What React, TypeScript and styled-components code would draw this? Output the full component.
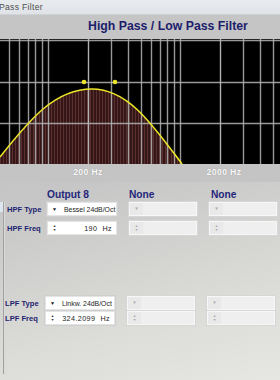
import React from "react";
import styled, { createGlobalStyle } from "styled-components";

const GlobalStyle = createGlobalStyle`
	* { box-sizing: border-box; }
	html, body { margin: 0; padding: 0; }
	body {
		width: 280px;
		height: 380px;
		overflow: hidden;
		font-family: "Liberation Sans", Arial, sans-serif;
		background: linear-gradient(165deg, #bfbfbf 0%, #c6c6c6 45%, #dcdcd8 80%, #e6e6e2 100%);
	}
`;

const CHART_W = 280;
const CHART_H = 125;

// log frequency axis: 200 Hz sits at 88px, one decade spans 132px
const fx = (f: number) => 88 + 132 * Math.log10(f / 200);

const gridFreqs = [
	50, 60, 70, 80, 90, 100, 200, 300, 400, 500, 600, 700, 800, 900, 1000, 2000,
	3000, 4000, 5000,
];
const gridRows = [1, 43, 84];

const curve = "M0,118 C30,80 55,50 92,50 C128,50 152,85 182,125";

function Chart() {
	return (
		<ChartBox>
			<svg width={CHART_W} height={CHART_H} viewBox={`0 0 ${CHART_W} ${CHART_H}`}>
				<defs>
					<pattern id="stripes" width="3" height="4" patternUnits="userSpaceOnUse">
						<rect width="3" height="4" fill="#351616" />
						<rect width="1" height="4" fill="#5a3030" />
					</pattern>
				</defs>
				<rect width={CHART_W} height={CHART_H} fill="#000" />
				<path d={`${curve} L0,125 Z`} fill="url(#stripes)" />
				{gridFreqs.map((f) => (
					<line
						key={f}
						x1={Math.round(fx(f)) + 0.5}
						x2={Math.round(fx(f)) + 0.5}
						y1={0}
						y2={CHART_H}
						stroke={f === 200 || f === 2000 ? "#cfcfcf" : "#b4b4b4"}
						strokeOpacity={0.85}
						strokeWidth={1.4}
					/>
				))}
				{gridRows.map((y) => (
					<line
						key={y}
						x1={0}
						x2={CHART_W}
						y1={y + 0.5}
						y2={y + 0.5}
						stroke="#b4b4b4"
						strokeOpacity={0.85}
						strokeWidth={1.4}
					/>
				))}
				<path d={curve} fill="none" stroke="#ece628" strokeWidth={1.6} />
				<circle cx={84} cy={43} r={2.3} fill="#ece628" />
				<circle cx={115} cy={43} r={2.3} fill="#ece628" />
			</svg>
		</ChartBox>
	);
}

type FieldProps = { kind: "select" | "spin"; value?: string; unit?: string; off?: boolean };

function Field({ kind, value, unit, off }: FieldProps) {
	return (
		<Box $off={off}>
			<Knob $off={off}>
				{kind === "select" ? (
					<Arrow $off={off}>▼</Arrow>
				) : (
					<Spin $off={off}>
						<span>▲</span>
						<span>▼</span>
					</Spin>
				)}
			</Knob>
			{kind === "select" ? (
				<SelectText>{value}</SelectText>
			) : (
				<SpinText>
					{value}
					{unit && <Unit>{unit}</Unit>}
				</SpinText>
			)}
		</Box>
	);
}

export default function App() {
	return (
		<>
			<GlobalStyle />
			<Window>
				<TitleBar>Pass Filter</TitleBar>
				<Header>High Pass / Low Pass Filter</Header>
				<Chart />
				<Axis>
					<AxisLabel style={{ left: fx(200) }}>200 Hz</AxisLabel>
					<AxisLabel style={{ left: fx(2000) + 4 }}>2000 Hz</AxisLabel>
				</Axis>
				<Controls>
					<Edge>
						<Stub />
					</Edge>
					<Panel>
						<Grid>
							<span />
							<ColHead>Output 8</ColHead>
							<ColHead>None</ColHead>
							<ColHead $pad={2}>None</ColHead>

							<RowLabel>HPF Type</RowLabel>
							<Field kind="select" value="Bessel 24dB/Oct" />
							<Field kind="select" off />
							<Field kind="select" off />

							<RowLabel>HPF Freq</RowLabel>
							<Field kind="spin" value="190" unit="Hz" />
							<Field kind="spin" off />
							<Field kind="spin" off />
						</Grid>
						<Grid $shift={-2} $top={61}>
							<RowLabel>LPF Type</RowLabel>
							<Field kind="select" value="Linkw. 24dB/Oct" />
							<Field kind="select" off />
							<Field kind="select" off />

							<RowLabel>LPF Freq</RowLabel>
							<Field kind="spin" value="324.2099" unit="Hz" />
							<Field kind="spin" off />
							<Field kind="spin" off />
						</Grid>
					</Panel>
				</Controls>
			</Window>
		</>
	);
}

const Window = styled.div`
	width: 280px;
	height: 380px;
	display: flex;
	flex-direction: column;
`;

const TitleBar = styled.div`
	height: 15px;
	margin-left: -1px;
	font-size: 8.6px;
	line-height: 15px;
	color: #4e4e4e;
	letter-spacing: 0.3px;
	background: linear-gradient(180deg, #e9ecef 0%, #dfe3e8 100%);
	border-bottom: 1px solid #d0d3d6;
`;

const Header = styled.div`
	height: 24px;
	padding: 4px 0 0 88px;
	font-size: 12.3px;
	font-weight: bold;
	line-height: 14px;
	color: #1c1d6c;
	background: #c5c5c5;
	white-space: nowrap;
`;

const ChartBox = styled.div`
	height: ${CHART_H}px;
	svg {
		display: block;
	}
`;

const Axis = styled.div`
	position: relative;
	height: 18px;
	background: #c4c4c4;
`;

const AxisLabel = styled.span`
	position: absolute;
	top: 3px;
	transform: translateX(-50%);
	font-size: 8.6px;
	font-weight: bold;
	letter-spacing: 0.4px;
	color: #fafafa;
	text-shadow: 0 0 1px #8a8a8a;
	white-space: nowrap;
`;

const Controls = styled.div`
	flex: 1;
	display: flex;
	padding-top: 7px;
`;

const Edge = styled.div`
	width: 4px;
	margin-top: 13px;
	height: 172px;
	border-right: 1px solid #a2a2a2;
	box-shadow: 1px 0 0 #d8d8d8;
`;

const Stub = styled.div`
	width: 3px;
	height: 10px;
	background: #dbe6f0;
`;

const Panel = styled.div`
	display: flex;
	flex-direction: column;
`;

const Grid = styled.div<{ $shift?: number; $top?: number }>`
	display: grid;
	grid-template-columns: 28px 70px 68px 68px;
	column-gap: 12px;
	row-gap: 5px;
	align-items: center;
	margin-top: ${(p) => p.$top ?? 0}px;
	padding-left: ${(p) => 3 + (p.$shift ?? 0)}px;
	& > *:nth-child(-n + 4) {
		margin-bottom: -4px;
	}
`;

const ColHead = styled.div<{ $pad?: number }>`
	padding-left: ${(p) => p.$pad ?? 0}px;
	font-size: 10.2px;
	font-weight: bold;
	line-height: 12px;
	color: #24267a;
`;

const RowLabel = styled.div`
	font-size: 7.6px;
	font-weight: bold;
	color: #1e2470;
	white-space: nowrap;
`;

const Box = styled.div<{ $off?: boolean }>`
	height: 14px;
	display: flex;
	align-items: center;
	overflow: hidden;
	background: ${(p) => (p.$off ? "#efefef" : "#ffffff")};
	border: 1px solid ${(p) => (p.$off ? "#f7f7f7" : "#e4e4e4")};
	box-shadow: ${(p) => (p.$off ? "0 0 0 1px #d6d6d6" : "0 0 0 1px #cfcfcf")};
`;

const Knob = styled.div<{ $off?: boolean }>`
	width: 13px;
	height: 100%;
	flex: none;
	display: flex;
	align-items: center;
	justify-content: center;
	background: ${(p) => (p.$off ? "#e9e9e9" : "transparent")};
`;

const Arrow = styled.span<{ $off?: boolean }>`
	font-size: ${(p) => (p.$off ? 4.5 : 5)}px;
	color: ${(p) => (p.$off ? "#a8a8a8" : "#111")};
	line-height: 1;
`;

const Spin = styled.span<{ $off?: boolean }>`
	display: flex;
	flex-direction: column;
	align-items: center;
	font-size: 3.6px;
	line-height: 4.5px;
	color: ${(p) => (p.$off ? "#a8a8a8" : "#333")};
`;

const SelectText = styled.span`
	padding-left: 3px;
	font-size: 6.9px;
	color: #222;
	white-space: nowrap;
`;

const SpinText = styled.span`
	flex: 1;
	display: flex;
	justify-content: flex-end;
	gap: 5px;
	padding-right: 4px;
	font-size: 7.2px;
	letter-spacing: 0.4px;
	color: #222;
	white-space: nowrap;
`;

const Unit = styled.span``;
